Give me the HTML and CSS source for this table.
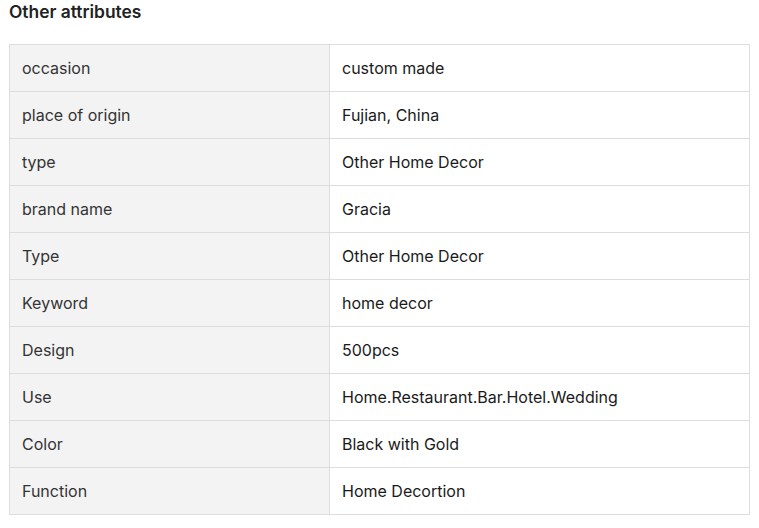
FILE: index.html
```html
<!DOCTYPE html>
<html>
<head>
<meta charset="utf-8">
<link rel="stylesheet" href="styles.css">
</head>
<body>
<div class="section">
  <h2 class="title">Other attributes</h2>
  <table class="attrs">
    <colgroup><col class="col-label"><col class="col-value"></colgroup>
    <tr><td class="label">occasion</td><td class="value">custom made</td></tr>
    <tr><td class="label">place of origin</td><td class="value">Fujian, China</td></tr>
    <tr><td class="label">type</td><td class="value">Other Home Decor</td></tr>
    <tr><td class="label">brand name</td><td class="value">Gracia</td></tr>
    <tr><td class="label">Type</td><td class="value">Other Home Decor</td></tr>
    <tr><td class="label">Keyword</td><td class="value">home decor</td></tr>
    <tr><td class="label">Design</td><td class="value">500pcs</td></tr>
    <tr><td class="label">Use</td><td class="value">Home.Restaurant.Bar.Hotel.Wedding</td></tr>
    <tr><td class="label">Color</td><td class="value">Black with Gold</td></tr>
    <tr><td class="label">Function</td><td class="value">Home Decortion</td></tr>
  </table>
</div>
</body>
</html>
```
FILE: styles.css
```css
html, body {
  margin: 0;
  padding: 0;
  background: #fff;
}
body {
  font-family: Inter, "Noto Sans", sans-serif;
  color: #222;
}
.section {
  padding: 1px 9px 0 9px;
}
.title {
  margin: 0;
  font-size: 17.4px;
  font-weight: 600;
  line-height: 22px;
  color: #222;
}
.attrs {
  margin-top: 21px;
  width: 741px;
  border-collapse: collapse;
  table-layout: fixed;
  font-size: 16px;
}
.col-label {
  width: 320px;
}
.attrs td {
  box-sizing: border-box;
  height: 47px;
  padding: 0 12px;
  border: 1px solid #ddd;
  vertical-align: middle;
  line-height: 20px;
}
.label {
  background: #f3f3f3;
  color: #333;
}
.value {
  color: #1a1a1a;
  font-weight: 400;
}
```
